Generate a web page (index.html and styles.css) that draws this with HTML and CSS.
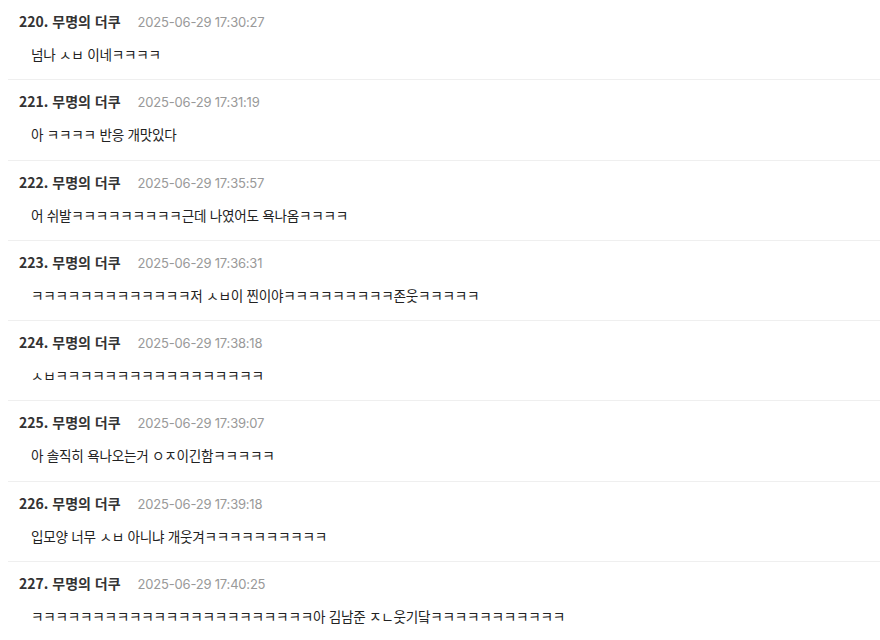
FILE: index.html
```html
<!DOCTYPE html>
<html lang="ko">
<head>
<meta charset="utf-8">
<link rel="stylesheet" href="styles.css">
</head>
<body>
<ul class="list">
  <li class="item"><div class="head"><span class="name">220. 무명의 더쿠</span><span class="date">2025-06-29 17:30:27</span></div><p class="text">넘나 ㅅㅂ 이네ㅋㅋㅋㅋ</p></li>
  <li class="item"><div class="head"><span class="name">221. 무명의 더쿠</span><span class="date">2025-06-29 17:31:19</span></div><p class="text">아 ㅋㅋㅋㅋ 반응 개맛있다</p></li>
  <li class="item"><div class="head"><span class="name">222. 무명의 더쿠</span><span class="date">2025-06-29 17:35:57</span></div><p class="text">어 쉬발ㅋㅋㅋㅋㅋㅋㅋㅋㅋ근데 나였어도 욕나옴ㅋㅋㅋㅋ</p></li>
  <li class="item"><div class="head"><span class="name">223. 무명의 더쿠</span><span class="date">2025-06-29 17:36:31</span></div><p class="text">ㅋㅋㅋㅋㅋㅋㅋㅋㅋㅋㅋㅋㅋ저 ㅅㅂ이 찐이야ㅋㅋㅋㅋㅋㅋㅋㅋㅋ존웃ㅋㅋㅋㅋㅋ</p></li>
  <li class="item"><div class="head"><span class="name">224. 무명의 더쿠</span><span class="date">2025-06-29 17:38:18</span></div><p class="text">ㅅㅂㅋㅋㅋㅋㅋㅋㅋㅋㅋㅋㅋㅋㅋㅋㅋㅋㅋ</p></li>
  <li class="item"><div class="head"><span class="name">225. 무명의 더쿠</span><span class="date">2025-06-29 17:39:07</span></div><p class="text">아 솔직히 욕나오는거 ㅇㅈ이긴함ㅋㅋㅋㅋㅋ</p></li>
  <li class="item"><div class="head"><span class="name">226. 무명의 더쿠</span><span class="date">2025-06-29 17:39:18</span></div><p class="text">입모양 너무 ㅅㅂ 아니냐 개웃겨ㅋㅋㅋㅋㅋㅋㅋㅋㅋㅋ</p></li>
  <li class="item"><div class="head"><span class="name">227. 무명의 더쿠</span><span class="date">2025-06-29 17:40:25</span></div><p class="text">ㅋㅋㅋㅋㅋㅋㅋㅋㅋㅋㅋㅋㅋㅋㅋㅋㅋㅋㅋㅋㅋㅋㅋ아 김남준 ㅈㄴ웃기닼ㅋㅋㅋㅋㅋㅋㅋㅋㅋㅋㅋ</p></li>
</ul>
</body>
</html>
```
FILE: styles.css
```css
html, body {
  margin: 0;
  padding: 0;
  background: #fff;
}
body {
  font-family: "Noto Sans CJK KR", "Noto Sans", sans-serif;
  color: #222;
}
.list {
  list-style: none;
  margin: 0;
  padding: 0 0 0 8px;
}
.item {
  padding: 11px 0 15.3px 11px;
  border-bottom: 1px solid #efefef;
}
.head {
  display: flex;
  align-items: baseline;
  gap: 17px;
  height: 20px;
  line-height: 20px;
}
.name {
  font-size: 14px;
  font-weight: 700;
  color: #333;
  letter-spacing: 0;
}
.date {
  font-size: 13px;
  color: #999;
  font-family: "Inter", "Noto Sans", sans-serif;
  letter-spacing: -0.2px;
}
.text {
  margin: 13px 0 0 12px;
  font-size: 13.6px;
  line-height: 20px;
  height: 20px;
  color: #222;
  letter-spacing: -0.25px;
}
```
